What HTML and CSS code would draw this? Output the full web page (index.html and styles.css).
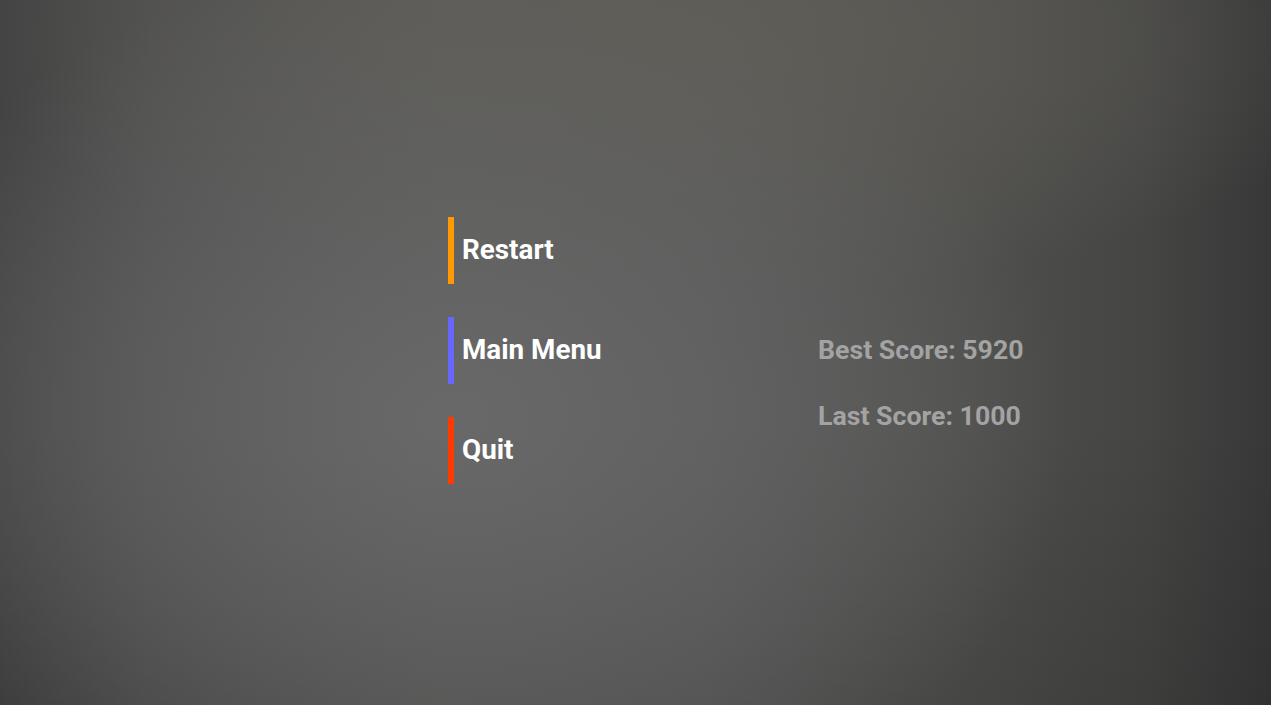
FILE: index.html
```html
<!DOCTYPE html>
<html>
<head>
<meta charset="utf-8">
<link rel="stylesheet" href="styles.css">
</head>
<body>
<div class="screen">
  <div class="layout">
    <div class="menu">
      <div class="item item-restart"><span class="label">Restart</span></div>
      <div class="item item-main"><span class="label">Main Menu</span></div>
      <div class="item item-quit"><span class="label">Quit</span></div>
    </div>
    <div class="scores">
      <div class="score">Best Score: 5920</div>
      <div class="score">Last Score: 1000</div>
    </div>
  </div>
</div>
</body>
</html>
```
FILE: styles.css
```css
html, body {
  margin: 0;
  padding: 0;
  width: 100%;
  height: 100%;
  overflow: hidden;
}
body {
  font-family: Roboto, "Liberation Sans", sans-serif;
}
.screen {
  width: 1271px;
  height: 705px;
  background:
    radial-gradient(ellipse 620px 460px at 450px 420px, rgba(106,106,106,0.9) 0%, rgba(100,100,100,0.55) 55%, rgba(90,90,90,0) 100%),
    radial-gradient(ellipse 700px 260px at 680px 40px, rgba(96,94,87,0.9) 0%, rgba(92,90,84,0) 100%),
    linear-gradient(180deg, rgba(0,0,0,0) 60%, rgba(0,0,0,0.12) 100%),
    linear-gradient(90deg, #434343 0%, #4f4f4f 12%, #5b5b5a 35%, #5a5a5a 55%, #50504e 75%, #454544 90%, #383838 100%);
  box-sizing: border-box;
  padding-top: 217px;
  padding-left: 448px;
}
.layout {
  display: flex;
}
.menu {
  display: flex;
  flex-direction: column;
  gap: 33px;
  width: 370px;
}
.item {
  height: 67px;
  display: flex;
  align-items: center;
  border-left: 6px solid;
  padding-left: 8px;
  box-sizing: border-box;
}
.item-restart { border-color: #ff9b00; }
.item-main { border-color: #6767ff; }
.item-quit { border-color: #ff3a00; }
.label {
  color: #ffffff;
  font-size: 27.8px;
  font-weight: 700;
  line-height: 1;
  margin-top: -1px;
}
.scores {
  display: flex;
  flex-direction: column;
  gap: 36px;
  padding-top: 118px;
}
.score {
  color: #a3a3a3;
  font-size: 26.7px;
  font-weight: 700;
  line-height: 30px;
}
```
